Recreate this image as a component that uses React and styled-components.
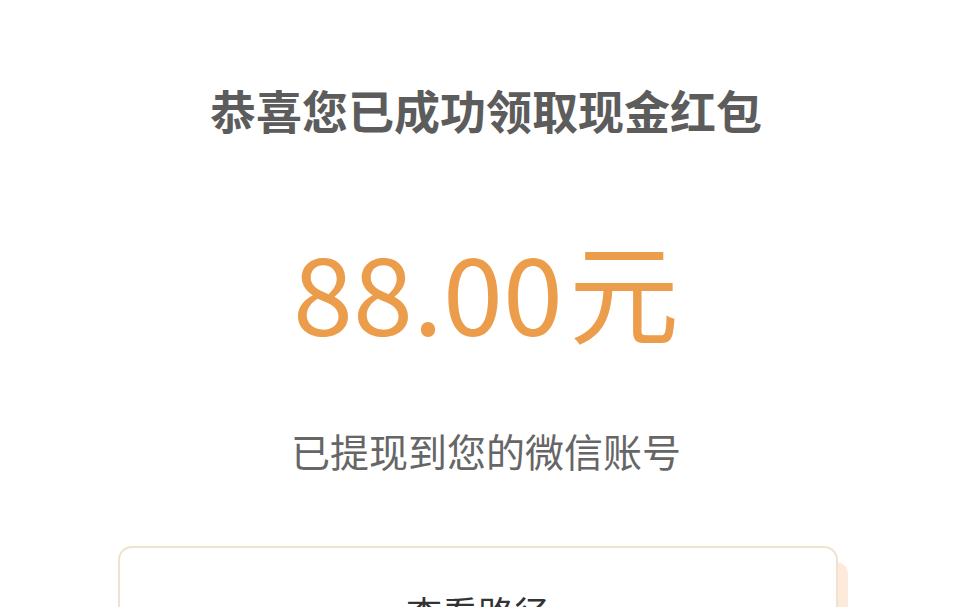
import React from "react";
import styled, { createGlobalStyle } from "styled-components";

const GlobalStyle = createGlobalStyle`
  html, body {
    margin: 0;
    padding: 0;
    background: #ffffff;
    font-family: "Noto Sans CJK SC", "Noto Sans", sans-serif;
  }
`;

export default function App() {
  return (
    <>
      <GlobalStyle />
      <StyledPage>
        <StyledTitle>恭喜您已成功领取现金红包</StyledTitle>
        <StyledAmount>
          88.00<StyledUnit>元</StyledUnit>
        </StyledAmount>
        <StyledHint>已提现到您的微信账号</StyledHint>
        <StyledCard>
          <StyledCardText>查看路径</StyledCardText>
        </StyledCard>
      </StyledPage>
    </>
  );
}

const StyledPage = styled.main`
  width: 972px;
  height: 607px;
  overflow: hidden;
  display: flex;
  flex-direction: column;
  align-items: center;
  padding-top: 79px;
  box-sizing: border-box;
`;

const StyledTitle = styled.h1`
  margin: 0;
  font-size: 46px;
  line-height: 60px;
  font-weight: 700;
  color: #5c5c5c;
`;

const StyledAmount = styled.div`
  margin-top: 84px;
  font-size: 108px;
  line-height: 130px;
  font-weight: 400;
  color: #ec9d4c;
  display: flex;
  align-items: baseline;
`;

const StyledUnit = styled.span`
  font-size: 110px;
  margin-left: 6px;
`;

const StyledHint = styled.p`
  margin: 71px 0 0;
  font-size: 39px;
  line-height: 50px;
  color: #666666;
`;

const StyledCard = styled.div`
  margin-top: 71px;
  align-self: flex-start;
  margin-left: 118px;
  width: 720px;
  height: 120px;
  flex-shrink: 0;
  border: 2px solid #efe3cf;
  border-radius: 14px;
  box-sizing: border-box;
  box-shadow: 12px 14px 0 -2px #fdeadb;
  display: flex;
  justify-content: center;
  padding-top: 40px;
`;

const StyledCardText = styled.span`
  font-size: 36px;
  line-height: 48px;
  color: #333333;
`;
